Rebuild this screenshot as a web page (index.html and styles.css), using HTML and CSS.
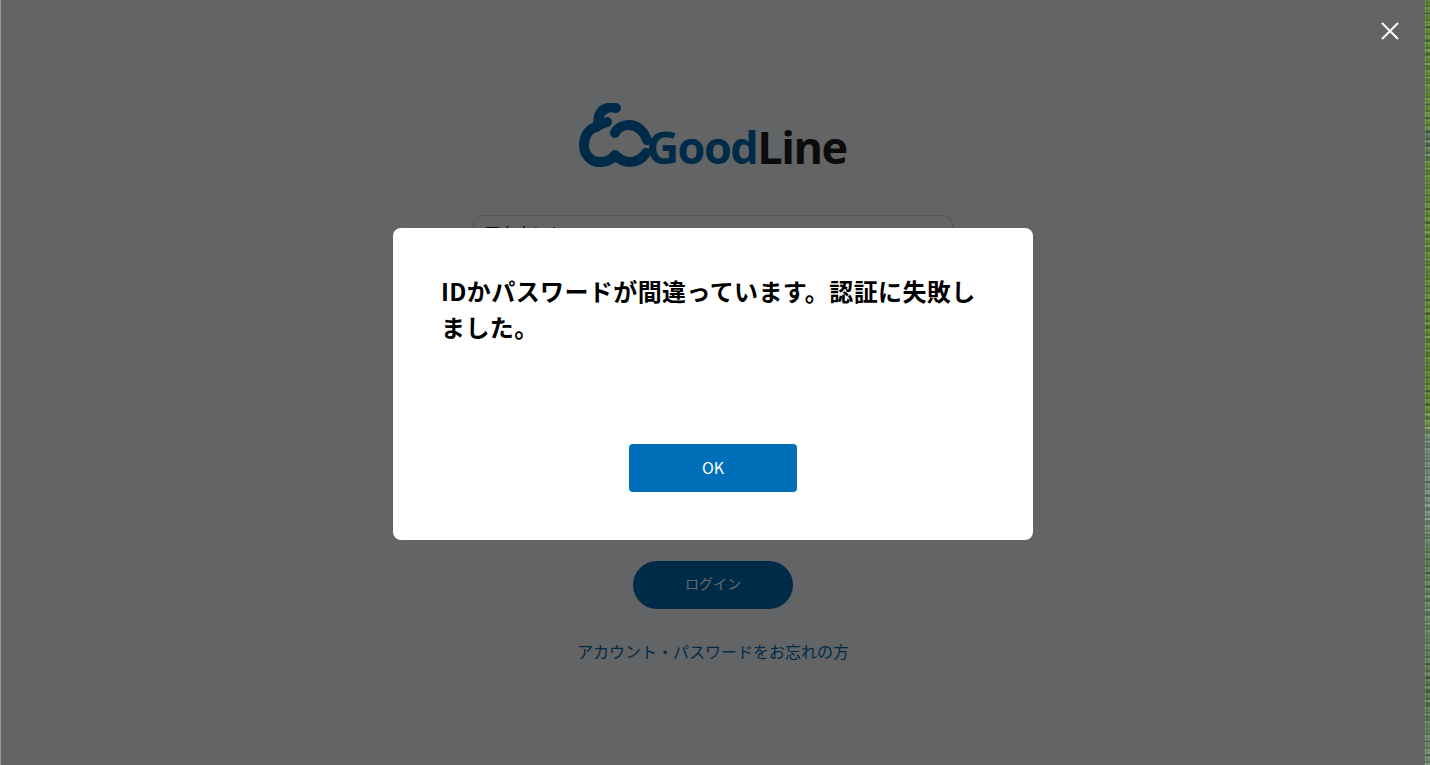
FILE: index.html
```html
<!DOCTYPE html>
<html lang="ja">
<head>
<meta charset="utf-8">
<title>GoodLine</title>
<link rel="stylesheet" href="styles.css">
</head>
<body>
<div class="edge"></div>
<div class="app">
  <main class="login">
    <div class="logo">
      <svg class="logo-mark" width="72" height="66" viewBox="0 0 72 66" fill="none" stroke="currentColor" stroke-width="10" stroke-linecap="round" stroke-linejoin="round">
        <path d="M37 5C30 3 22 6 20 13C19 19 20 22 17 24C9 26 5 34 5 42C5 52 12 59 21 59C28 59 33 56 36 52C40 56 45 59 51 59C58 59 63 56 67 50"/>
        <path d="M36 30C38 25 44 22 50 22C58 22 65 28 68 37"/>
        <path d="M17 24C20 22 24 20 28 19"/>
      </svg>
      <span class="logo-text"><span class="logo-good">Good</span>Line</span>
    </div>
    <div class="field"><span class="field-text">アカウント</span></div>
    <button class="login-btn" type="button">ログイン</button>
    <a class="forgot" href="#">アカウント・パスワードをお忘れの方</a>
  </main>
  <div class="overlay">
    <button class="close" type="button" aria-label="閉じる">
      <svg width="20" height="20" viewBox="0 0 20 20" fill="none" stroke="#fff" stroke-width="2"><path d="M2 2L18 18M18 2L2 18"/></svg>
    </button>
    <section class="dialog">
      <p class="message">IDかパスワードが間違っています。認証に失敗しました。</p>
      <button class="ok" type="button">OK</button>
    </section>
  </div>
</div>
<div class="wallpaper"></div>
</body>
</html>
```
FILE: styles.css
```css
* { box-sizing: border-box; }
html, body { height: 100%; }
body {
  margin: 0;
  display: flex;
  height: 765px;
  overflow: hidden;
  font-family: "Noto Sans CJK JP", "Open Sans", sans-serif;
}
.edge { width: 1px; background: #9a9a9a; }
.wallpaper {
  width: 5px;
  background:
    repeating-linear-gradient(90deg, rgba(255,255,255,.1) 0 1px, rgba(0,0,0,.12) 1px 3px, transparent 3px 5px),
    repeating-linear-gradient(180deg, rgba(255,255,255,.12) 0 2px, transparent 2px 5px, rgba(0,0,0,.16) 5px 7px),
    repeating-linear-gradient(180deg, rgba(0,0,0,.14) 0 3px, transparent 3px 11px, rgba(255,255,255,.1) 11px 13px),
    linear-gradient(180deg, #5f8a35 0, #64903a 125px, #5a7358 135px, #627a5e 148px, #5f9038 165px, #5b8a30 400px, #6d9a4a 425px, #72887c 440px, #7a9080 515px, #5e8350 560px, #6c8a62 620px, #557c48 690px, #7a9070 765px);
}
.app { position: relative; flex: 1; background: #f8f9fc; }
.login { display: flex; flex-direction: column; align-items: center; padding-top: 103px; }
.logo { display: flex; align-items: flex-end; height: 66px; }
.logo-mark { color: #006cb5; margin-right: -5px; }
.logo-text {
  font-family: "Open Sans", sans-serif;
  font-weight: 700;
  font-size: 45px;
  line-height: 44px;
  letter-spacing: -1.5px;
  color: #1c1c1c;
}
.logo-good { color: #006cb5; }
.field {
  width: 480px;
  height: 56px;
  margin-top: 46px;
  padding: 4px 10px;
  border: 1px solid #d4d4d4;
  border-radius: 10px;
  background: #f8f9fc;
  font-size: 16px;
  line-height: 24px;
  color: #222;
}
.login-btn {
  width: 160px;
  height: 48px;
  margin-top: 290px;
  padding: 0 0 4px;
  border: 0;
  border-radius: 24px;
  background: #006db5;
  color: #fff;
  font: 400 14px "Noto Sans CJK JP", sans-serif;
}
.forgot {
  margin-top: 30px;
  font-size: 16px;
  line-height: 24px;
  color: #006db5;
  text-decoration: none;
}
.overlay {
  position: absolute;
  inset: 0;
  display: flex;
  align-items: center;
  justify-content: center;
  padding-top: 3px;
  background: rgba(0,0,0,.6);
}
.close {
  position: absolute;
  top: 21px;
  right: 25px;
  padding: 0;
  border: 0;
  background: none;
  display: flex;
}
.dialog {
  width: 640px;
  padding: 48px;
  border-radius: 8px;
  background: #fff;
  display: flex;
  flex-direction: column;
  align-items: center;
}
.message {
  margin: -3px 0 99px;
  width: 100%;
  font-size: 24px;
  font-weight: 700;
  line-height: 36px;
  letter-spacing: .4px;
  color: #000;
}
.ok {
  width: 168px;
  height: 48px;
  padding: 0 0 2px;
  border: 0;
  border-radius: 4px;
  background: #006fba;
  color: #fff;
  font: 400 16px "Noto Sans CJK JP", sans-serif;
}
```
